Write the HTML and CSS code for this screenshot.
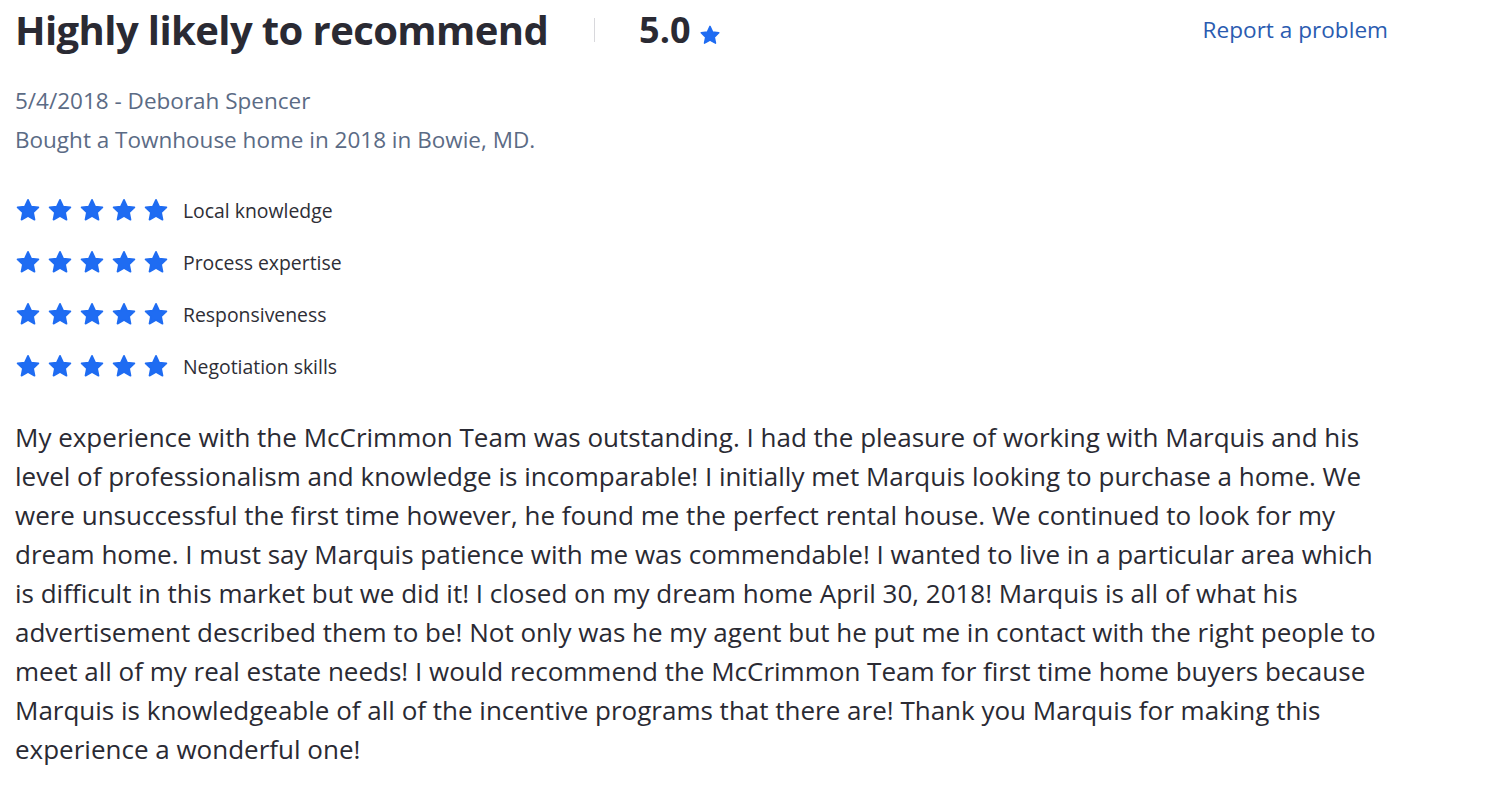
FILE: index.html
```html
<!DOCTYPE html>
<html lang="en">
<head>
	<meta charset="UTF-8">
	<title>Review</title>
	<link rel="stylesheet" href="styles.css">
</head>
<body>
	<div class="review">
		<div class="review-head">
			<h2 class="review-title">Highly likely to recommend</h2>
			<span class="review-sep"></span>
			<span class="review-score">5.0</span>
			<svg class="review-star" viewBox="0 0 24 24"><path d="M12 2.6l2.9 6.2 6.7.8-4.9 4.7 1.3 6.6L12 17.6l-6 3.3 1.3-6.6-4.9-4.7 6.7-.8z"/></svg>
			<a class="review-report" href="#">Report a problem</a>
		</div>

		<div class="review-meta review-date">5/4/2018 - Deborah Spencer</div>
		<div class="review-meta">Bought a Townhouse home in 2018 in Bowie, MD.</div>

		<ul class="ratings">
			<li>
				<span class="stars">
					<svg viewBox="0 0 24 24"><path d="M12 2.6l2.9 6.2 6.7.8-4.9 4.7 1.3 6.6L12 17.6l-6 3.3 1.3-6.6-4.9-4.7 6.7-.8z"/></svg>
					<svg viewBox="0 0 24 24"><path d="M12 2.6l2.9 6.2 6.7.8-4.9 4.7 1.3 6.6L12 17.6l-6 3.3 1.3-6.6-4.9-4.7 6.7-.8z"/></svg>
					<svg viewBox="0 0 24 24"><path d="M12 2.6l2.9 6.2 6.7.8-4.9 4.7 1.3 6.6L12 17.6l-6 3.3 1.3-6.6-4.9-4.7 6.7-.8z"/></svg>
					<svg viewBox="0 0 24 24"><path d="M12 2.6l2.9 6.2 6.7.8-4.9 4.7 1.3 6.6L12 17.6l-6 3.3 1.3-6.6-4.9-4.7 6.7-.8z"/></svg>
					<svg viewBox="0 0 24 24"><path d="M12 2.6l2.9 6.2 6.7.8-4.9 4.7 1.3 6.6L12 17.6l-6 3.3 1.3-6.6-4.9-4.7 6.7-.8z"/></svg>
				</span>
				<span class="rating-label">Local knowledge</span>
			</li>
			<li>
				<span class="stars">
					<svg viewBox="0 0 24 24"><path d="M12 2.6l2.9 6.2 6.7.8-4.9 4.7 1.3 6.6L12 17.6l-6 3.3 1.3-6.6-4.9-4.7 6.7-.8z"/></svg>
					<svg viewBox="0 0 24 24"><path d="M12 2.6l2.9 6.2 6.7.8-4.9 4.7 1.3 6.6L12 17.6l-6 3.3 1.3-6.6-4.9-4.7 6.7-.8z"/></svg>
					<svg viewBox="0 0 24 24"><path d="M12 2.6l2.9 6.2 6.7.8-4.9 4.7 1.3 6.6L12 17.6l-6 3.3 1.3-6.6-4.9-4.7 6.7-.8z"/></svg>
					<svg viewBox="0 0 24 24"><path d="M12 2.6l2.9 6.2 6.7.8-4.9 4.7 1.3 6.6L12 17.6l-6 3.3 1.3-6.6-4.9-4.7 6.7-.8z"/></svg>
					<svg viewBox="0 0 24 24"><path d="M12 2.6l2.9 6.2 6.7.8-4.9 4.7 1.3 6.6L12 17.6l-6 3.3 1.3-6.6-4.9-4.7 6.7-.8z"/></svg>
				</span>
				<span class="rating-label">Process expertise</span>
			</li>
			<li>
				<span class="stars">
					<svg viewBox="0 0 24 24"><path d="M12 2.6l2.9 6.2 6.7.8-4.9 4.7 1.3 6.6L12 17.6l-6 3.3 1.3-6.6-4.9-4.7 6.7-.8z"/></svg>
					<svg viewBox="0 0 24 24"><path d="M12 2.6l2.9 6.2 6.7.8-4.9 4.7 1.3 6.6L12 17.6l-6 3.3 1.3-6.6-4.9-4.7 6.7-.8z"/></svg>
					<svg viewBox="0 0 24 24"><path d="M12 2.6l2.9 6.2 6.7.8-4.9 4.7 1.3 6.6L12 17.6l-6 3.3 1.3-6.6-4.9-4.7 6.7-.8z"/></svg>
					<svg viewBox="0 0 24 24"><path d="M12 2.6l2.9 6.2 6.7.8-4.9 4.7 1.3 6.6L12 17.6l-6 3.3 1.3-6.6-4.9-4.7 6.7-.8z"/></svg>
					<svg viewBox="0 0 24 24"><path d="M12 2.6l2.9 6.2 6.7.8-4.9 4.7 1.3 6.6L12 17.6l-6 3.3 1.3-6.6-4.9-4.7 6.7-.8z"/></svg>
				</span>
				<span class="rating-label">Responsiveness</span>
			</li>
			<li>
				<span class="stars">
					<svg viewBox="0 0 24 24"><path d="M12 2.6l2.9 6.2 6.7.8-4.9 4.7 1.3 6.6L12 17.6l-6 3.3 1.3-6.6-4.9-4.7 6.7-.8z"/></svg>
					<svg viewBox="0 0 24 24"><path d="M12 2.6l2.9 6.2 6.7.8-4.9 4.7 1.3 6.6L12 17.6l-6 3.3 1.3-6.6-4.9-4.7 6.7-.8z"/></svg>
					<svg viewBox="0 0 24 24"><path d="M12 2.6l2.9 6.2 6.7.8-4.9 4.7 1.3 6.6L12 17.6l-6 3.3 1.3-6.6-4.9-4.7 6.7-.8z"/></svg>
					<svg viewBox="0 0 24 24"><path d="M12 2.6l2.9 6.2 6.7.8-4.9 4.7 1.3 6.6L12 17.6l-6 3.3 1.3-6.6-4.9-4.7 6.7-.8z"/></svg>
					<svg viewBox="0 0 24 24"><path d="M12 2.6l2.9 6.2 6.7.8-4.9 4.7 1.3 6.6L12 17.6l-6 3.3 1.3-6.6-4.9-4.7 6.7-.8z"/></svg>
				</span>
				<span class="rating-label">Negotiation skills</span>
			</li>
		</ul>

		<p class="review-text">My experience with the McCrimmon Team was outstanding. I had the pleasure of working with Marquis and his level of professionalism and knowledge is incomparable! I initially met Marquis looking to purchase a home. We were unsuccessful the first time however, he found me the perfect rental house. We continued to look for my dream home. I must say Marquis patience with me was commendable! I wanted to live in a particular area which is difficult in this market but we did it! I closed on my dream home April 30, 2018! Marquis is all of what his advertisement described them to be! Not only was he my agent but he put me in contact with the right people to meet all of my real estate needs! I would recommend the McCrimmon Team for first time home buyers because Marquis is knowledgeable of all of the incentive programs that there are! Thank you Marquis for making this experience a wonderful one!</p>
	</div>
</body>
</html>
```

FILE: styles.css
```css
*{margin: 0;padding: 0;box-sizing: border-box;}
li{list-style: none;}
body{background: #fff;font-family: "Open Sans", "Liberation Sans", sans-serif;color: #2a2a33;}

.review{width: 1400px;padding: 6px 0 0 15px;}

.review-head{display: flex;align-items: center;height: 48px;}
.review-title{font-size: 40px;font-weight: 700;letter-spacing: -0.6px;color: #2a2a33;line-height: 48px;}
.review-sep{width: 1px;height: 24px;background: #d8d8dc;margin: 0 44px 0 46px;}
.review-score{font-size: 36px;font-weight: 700;color: #2a2a33;line-height: 48px;}
.review-star{width: 22px;height: 22px;fill: #1f6cf2;stroke: #1f6cf2;stroke-width: 1.6;stroke-linejoin: round;margin: 10px 0 0 8px;}
.review-report{margin-left: auto;margin-right: 12px;font-size: 22.6px;color: #2a5bb0;text-decoration: none;align-self: flex-start;margin-top: 8px;}

.review-meta{font-size: 22.5px;color: #5b6b85;line-height: 39px;}
.review-date{margin-top: 27px;}

.ratings{margin-top: 25px;}
.ratings li{display: flex;align-items: center;height: 52px;}
.stars{display: flex;gap: 6px;}
.stars svg{width: 26px;height: 26px;fill: #1f6cf2;stroke: #1f6cf2;stroke-width: 1.6;stroke-linejoin: round;}
.rating-label{margin-left: 14px;font-size: 19.4px;color: #2e2e36;}

.review-text{margin-top: 26px;width: 1375px;font-size: 26px;line-height: 39px;color: #2a2a33;}
```
